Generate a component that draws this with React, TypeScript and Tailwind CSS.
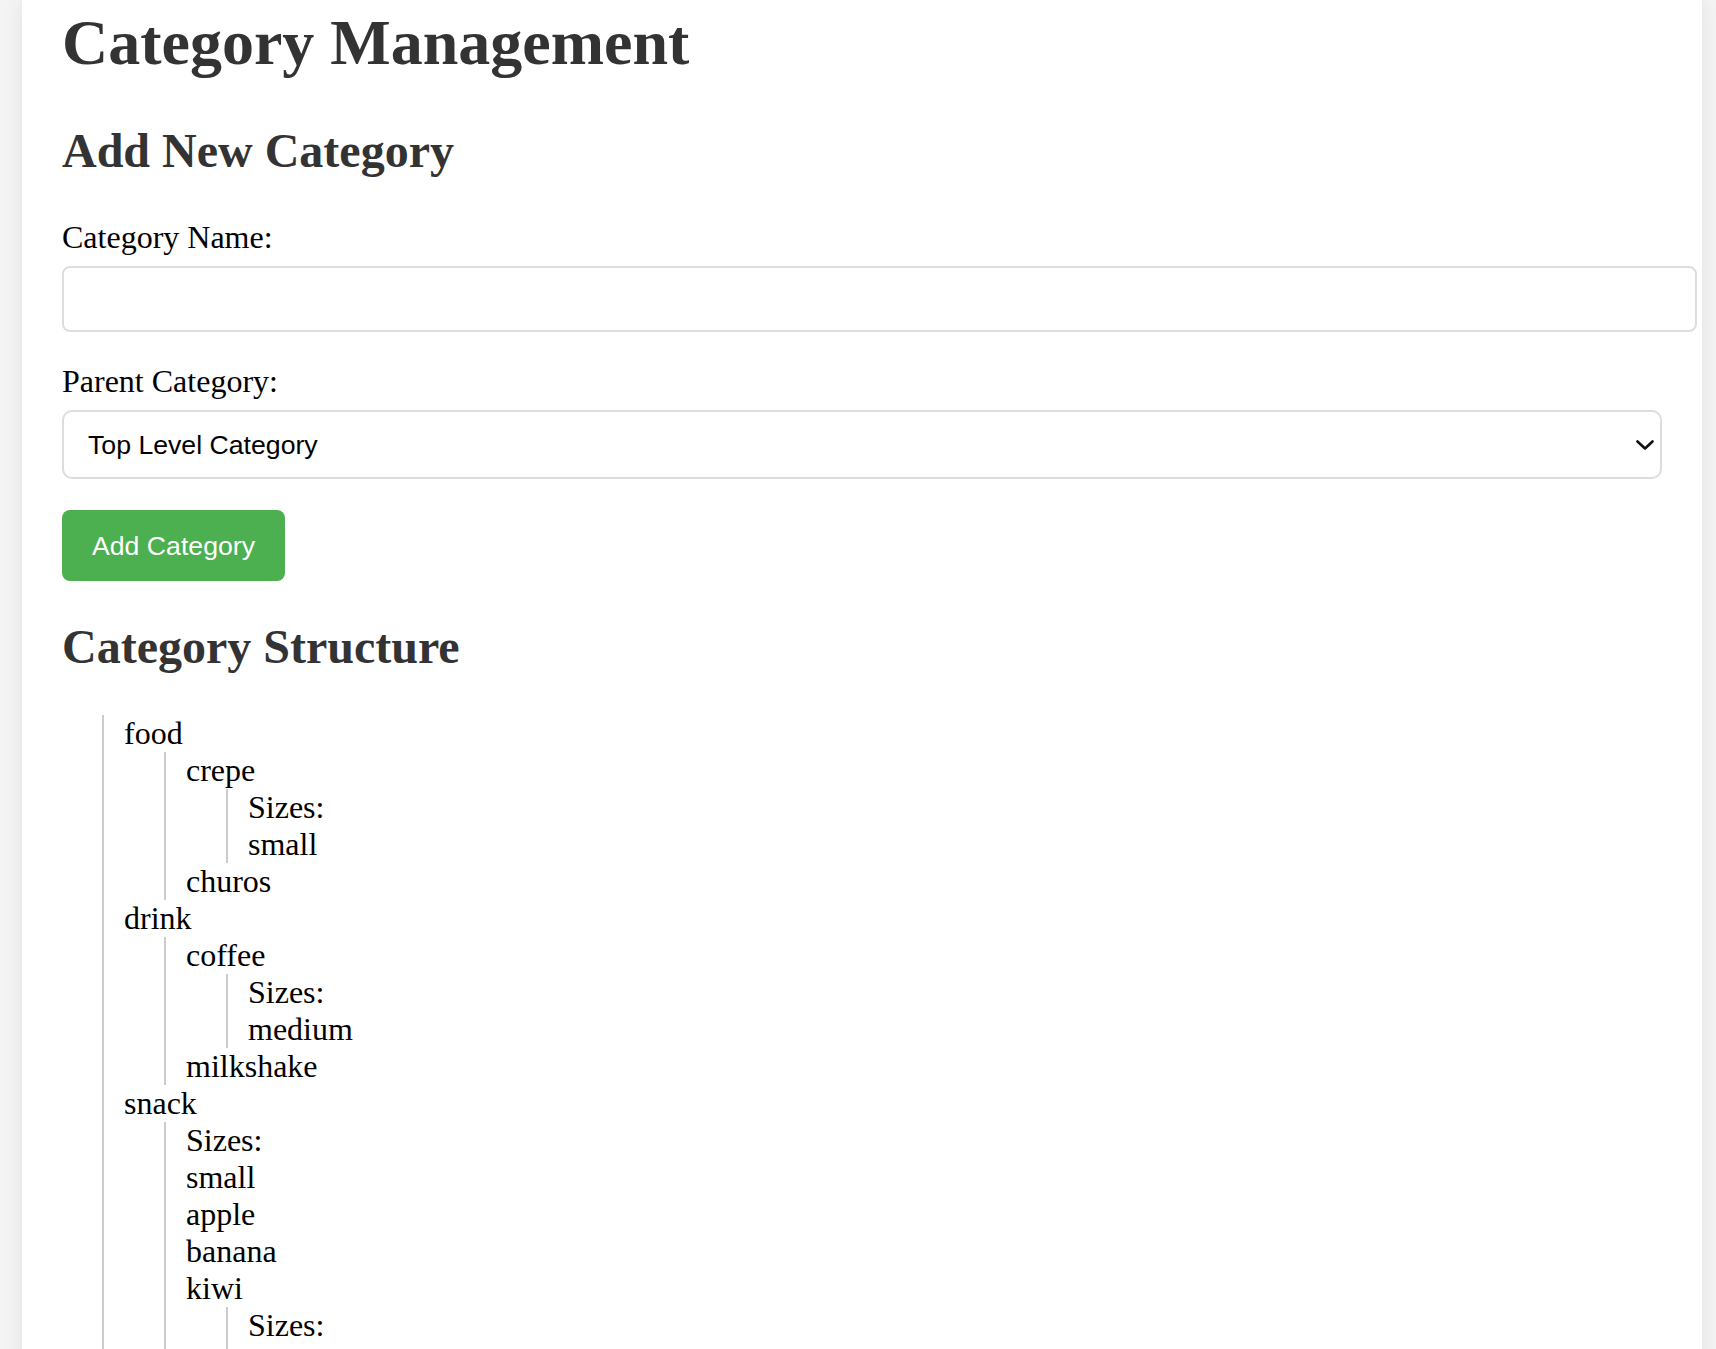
import React from 'react';

type Category = {
  name: string;
  sizes?: string[];
  children?: Category[];
};

const tree: Category[] = [
  {
    name: 'food',
    children: [{ name: 'crepe', sizes: ['small'] }, { name: 'churos' }],
  },
  {
    name: 'drink',
    children: [{ name: 'coffee', sizes: ['medium'] }, { name: 'milkshake' }],
  },
  {
    name: 'snack',
    sizes: ['small'],
    children: [
      { name: 'apple' },
      { name: 'banana' },
      { name: 'kiwi', sizes: ['small'] },
    ],
  },
];

const CategoryNode = ({ node }: { node: Category }) => {
  const hasNested = (node.sizes && node.sizes.length > 0) || (node.children && node.children.length > 0);
  return (
    <li>
      <div className="h-[37px] leading-[37px]">{node.name}</div>
      {hasNested && (
        <ul className="ml-[40px] border-l-2 border-[#cccccc] pl-[20px]">
          {node.sizes && node.sizes.length > 0 && (
            <>
              <li className="h-[37px] leading-[37px]">Sizes:</li>
              {node.sizes.map((s) => (
                <li key={s} className="h-[37px] leading-[37px]">{s}</li>
              ))}
            </>
          )}
          {node.children?.map((c) => (
            <CategoryNode key={c.name} node={c} />
          ))}
        </ul>
      )}
    </li>
  );
};

export default function App() {
  return (
    <div className="h-screen overflow-hidden bg-[#f4f4f4] font-['Liberation_Serif','Times_New_Roman',serif] text-black">
      <div className="ml-[22px] min-h-screen w-[1680px] bg-white px-[40px] pt-[7px] shadow-[0_0_20px_rgba(0,0,0,0.08)]">
        <h1 className="h-[72px] text-[64px] font-bold leading-[72px] text-[#333333]">Category Management</h1>

        {/* Add form */}
        <h2 className="mt-[44px] h-[56px] text-[48px] font-bold leading-[56px] text-[#333333]">Add New Category</h2>

        <label className="mt-[40px] block h-[36px] text-[32px] leading-[36px]">Category Name:</label>
        <input
          type="text"
          className="mt-[11px] block h-[66px] w-[1635px] rounded-[8px] border-2 border-[#dddddd] bg-white px-[16px] font-['Liberation_Sans',Arial,sans-serif] text-[26.67px] outline-none"
        />

        <label className="mt-[31px] block h-[36px] text-[32px] leading-[36px]">Parent Category:</label>
        <div className="relative mt-[11px] h-[69px] w-full">
          <select className="block h-[69px] w-full appearance-none rounded-[10px] border-2 border-[#dddddd] bg-white pl-[24px] font-['Liberation_Sans',Arial,sans-serif] text-[26.67px] text-black outline-none">
            <option>Top Level Category</option>
          </select>
          <svg
            className="pointer-events-none absolute right-[8px] top-[30px]"
            width="18"
            height="10"
            viewBox="0 0 18 10"
            fill="none"
          >
            <path d="M1.5 1.5 L9 8.5 L16.5 1.5" stroke="#111111" strokeWidth="2.6" strokeLinecap="round" strokeLinejoin="round" />
          </svg>
        </div>

        <button className="mt-[31px] block h-[71px] rounded-[8px] bg-[#4caf50] px-[30px] font-['Liberation_Sans',Arial,sans-serif] text-[26.67px] text-white">
          Add Category
        </button>

        {/* Tree */}
        <h2 className="mt-[38px] h-[56px] text-[48px] font-bold leading-[56px] text-[#333333]">Category Structure</h2>

        <ul className="ml-[40px] mt-[40px] border-l-2 border-[#cccccc] pl-[20px] text-[32px]">
          {tree.map((n) => (
            <CategoryNode key={n.name} node={n} />
          ))}
        </ul>
      </div>
    </div>
  );
}
